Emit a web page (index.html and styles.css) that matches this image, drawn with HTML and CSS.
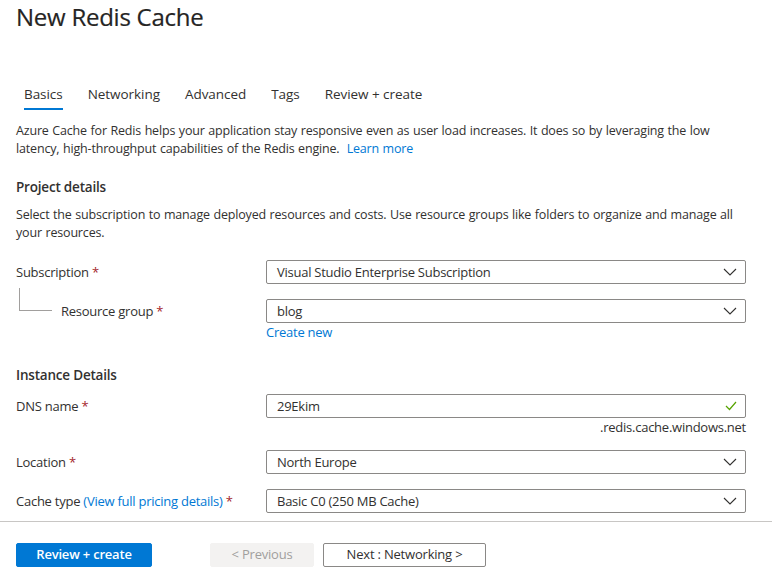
FILE: index.html
```html
<!DOCTYPE html>
<html lang="en">
<head>
<meta charset="utf-8">
<title>New Redis Cache</title>
<link rel="stylesheet" href="styles.css">
</head>
<body>
<div class="page">
  <h1 class="title">New Redis Cache</h1>

  <nav class="tabs">
    <span class="tab active">Basics</span>
    <span class="tab">Networking</span>
    <span class="tab">Advanced</span>
    <span class="tab">Tags</span>
    <span class="tab">Review + create</span>
  </nav>

  <p class="desc">Azure Cache for Redis helps your application stay responsive even as user load increases. It does so by leveraging the low latency, high-throughput capabilities of the Redis engine.&nbsp; <a class="link" href="#">Learn more</a></p>

  <h2 class="section">Project details</h2>
  <p class="desc sub">Select the subscription to manage deployed resources and costs. Use resource groups like folders to organize and manage all your resources.</p>

  <div class="row first">
    <div class="label">Subscription <span class="req">*</span></div>
    <div class="field select"><span class="value">Visual Studio Enterprise Subscription</span>
      <svg class="chev" width="14" height="8" viewBox="0 0 14 8"><polyline points="1,1 7,7 13,1" fill="none" stroke="#323130" stroke-width="1.1"/></svg>
    </div>
  </div>

  <div class="row second">
    <div class="label nested"><span class="tree"></span>Resource group <span class="req">*</span></div>
    <div class="field select"><span class="value">blog</span>
      <svg class="chev" width="14" height="8" viewBox="0 0 14 8"><polyline points="1,1 7,7 13,1" fill="none" stroke="#323130" stroke-width="1.1"/></svg>
    </div>
  </div>
  <div class="under"><a class="link" href="#">Create new</a></div>

  <h2 class="section instance">Instance Details</h2>

  <div class="row dns">
    <div class="label">DNS name <span class="req">*</span></div>
    <div class="field input"><span class="value">29Ekim</span>
      <svg class="check" width="12" height="10" viewBox="0 0 12 10"><polyline points="1,5 4.5,8.5 11,1" fill="none" stroke="#57a300" stroke-width="1.2"/></svg>
    </div>
  </div>
  <div class="under suffix">.redis.cache.windows.net</div>

  <div class="row location">
    <div class="label">Location <span class="req">*</span></div>
    <div class="field select"><span class="value">North Europe</span>
      <svg class="chev" width="14" height="8" viewBox="0 0 14 8"><polyline points="1,1 7,7 13,1" fill="none" stroke="#323130" stroke-width="1.1"/></svg>
    </div>
  </div>

  <div class="row second">
    <div class="label">Cache type <a class="link" href="#">(View full pricing details)</a> <span class="req">*</span></div>
    <div class="field select"><span class="value">Basic C0 (250 MB Cache)</span>
      <svg class="chev" width="14" height="8" viewBox="0 0 14 8"><polyline points="1,1 7,7 13,1" fill="none" stroke="#323130" stroke-width="1.1"/></svg>
    </div>
  </div>
</div>

<div class="footer">
  <div class="buttons">
    <button class="btn primary">Review + create</button>
    <button class="btn disabled">&lt; Previous</button>
    <button class="btn outline">Next : Networking &gt;</button>
  </div>
</div>
</body>
</html>
```

FILE: styles.css
```css
* { box-sizing: border-box; }

body {
  margin: 0;
  background: #ffffff;
  color: #323130;
  font-family: "Open Sans", "Noto Sans", sans-serif;
  font-size: 13px;
  width: 775px;
}

.page {
  padding-left: 16px;
  width: 772px;
}

.title {
  margin: 0;
  font-size: 24px;
  font-weight: 400;
  line-height: 33px;
  letter-spacing: -0.25px;
  color: #252423;
  -webkit-text-stroke: 0.2px #252423;
}

.tabs {
  display: flex;
  gap: 25px;
  margin-top: 51px;
  padding-left: 8px;
}

.tab {
  line-height: 20px;
  padding-bottom: 4px;
  border-bottom: 2px solid transparent;
  font-size: 13.5px;
  letter-spacing: -0.05px;
  color: #323130;
}

.tab.active {
  border-bottom-color: #0078d4;
}

.desc {
  margin: 12px 0 0;
  width: 731px;
  line-height: 18px;
  font-size: 12.5px;
  letter-spacing: -0.17px;
  word-spacing: 0.5px;
}

.desc.sub {
  margin-top: 9px;
}

.link {
  color: #0078d4;
  text-decoration: none;
}

.section {
  margin: 19px 0 0;
  font-size: 13.5px;
  font-weight: 600;
  line-height: 20px;
  letter-spacing: -0.2px;
}

.section.instance {
  margin-top: 24px;
}

.row {
  display: flex;
  align-items: center;
  height: 24px;
}

.row.first { margin-top: 18px; }
.row.second { margin-top: 15px; }
.row.dns { margin-top: 9px; }
.row.location { margin-top: 13px; }

.label {
  width: 250px;
  flex: none;
  letter-spacing: -0.25px;
  white-space: nowrap;
  position: relative;
}

.label.nested {
  padding-left: 45px;
}

.tree {
  position: absolute;
  left: 3px;
  top: -14px;
  width: 33px;
  height: 23px;
  border-left: 1px solid #a19f9d;
  border-bottom: 1px solid #a19f9d;
}

.req {
  color: #a4262c;
}

.field {
  width: 480px;
  height: 24px;
  border: 1px solid #8a8886;
  border-radius: 2px;
  display: flex;
  align-items: center;
  justify-content: space-between;
  padding: 0 8px 0 10px;
}

.value {
  letter-spacing: -0.25px;
  color: #323130;
}

.chev { display: block; }
.check { display: block; }

.under {
  margin-left: 250px;
  width: 480px;
  line-height: 18px;
  letter-spacing: -0.25px;
}

.suffix {
  text-align: right;
  line-height: 19px;
}

.footer {
  margin-top: 8px;
  width: 772px;
  border-top: 1px solid #c8c6c4;
  padding: 21px 0 0 16px;
}

.buttons {
  display: flex;
}

.btn {
  height: 24px;
  border-radius: 2px;
  font-family: "Open Sans", "Noto Sans", sans-serif;
  font-size: 13px;
  font-weight: 600;
  letter-spacing: -0.2px;
  padding: 0 0 2px;
  line-height: 18px;
  cursor: pointer;
}

.btn.primary {
  width: 136px;
  background: #0078d4;
  border: 1px solid #0078d4;
  color: #ffffff;
}

.btn.disabled {
  width: 104px;
  margin-left: 58px;
  background: #f3f2f1;
  border: 1px solid #f3f2f1;
  color: #a19f9d;
  font-weight: 400;
}

.btn.outline {
  width: 163px;
  margin-left: 9px;
  background: #ffffff;
  border: 1px solid #8a8886;
  color: #323130;
  font-weight: 400;
}
```
